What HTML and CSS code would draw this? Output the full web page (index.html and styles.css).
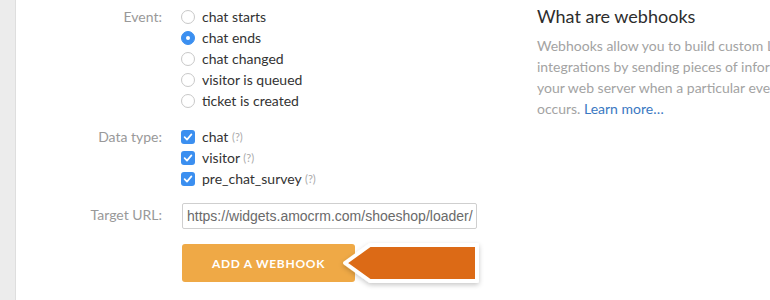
FILE: index.html
```html
<!DOCTYPE html>
<html>
<head>
<meta charset="utf-8">
<link rel="stylesheet" href="styles.css">
</head>
<body>
<div class="sidebar"></div>
<div class="main">
  <div class="form">
    <div class="label">Event:</div>
    <div class="group">
      <div class="opt"><span class="radio"></span>chat starts</div>
      <div class="opt"><span class="radio on"></span>chat ends</div>
      <div class="opt"><span class="radio"></span>chat changed</div>
      <div class="opt"><span class="radio"></span>visitor is queued</div>
      <div class="opt"><span class="radio"></span>ticket is created</div>
    </div>
    <div class="label">Data type:</div>
    <div class="group group-data">
      <div class="opt"><span class="check"><svg viewBox="0 0 14 14" width="14" height="14"><path d="M3.6 7.2 L6 9.6 L10.4 4.4" fill="none" stroke="#fff" stroke-width="1.7" stroke-linecap="round" stroke-linejoin="round"/></svg></span>chat <span class="q">(?)</span></div>
      <div class="opt"><span class="check"><svg viewBox="0 0 14 14" width="14" height="14"><path d="M3.6 7.2 L6 9.6 L10.4 4.4" fill="none" stroke="#fff" stroke-width="1.7" stroke-linecap="round" stroke-linejoin="round"/></svg></span>visitor <span class="q">(?)</span></div>
      <div class="opt"><span class="check"><svg viewBox="0 0 14 14" width="14" height="14"><path d="M3.6 7.2 L6 9.6 L10.4 4.4" fill="none" stroke="#fff" stroke-width="1.7" stroke-linecap="round" stroke-linejoin="round"/></svg></span>pre_chat_survey <span class="q">(?)</span></div>
    </div>
    <div class="label url-label">Target URL:</div>
    <div class="field">
      <input class="input" type="text" value="https://widgets.amocrm.com/shoeshop/loader/">
    </div>
    <div></div>
    <div class="actions">
      <button class="btn">ADD A WEBHOOK</button>
      <svg class="pointer" width="150" height="54" viewBox="0 0 150 54">
        <defs>
          <filter id="sh" x="-20%" y="-30%" width="140%" height="170%">
            <feDropShadow dx="0" dy="2" stdDeviation="2.5" flood-color="#000" flood-opacity="0.22"/>
          </filter>
        </defs>
        <polygon points="7,25 32,7 139,7 139,43 32,43" fill="#dc6b13" stroke="#fff" stroke-width="4" stroke-linejoin="round" filter="url(#sh)"/>
      </svg>
    </div>
  </div>
  <div class="info">
    <h2>What are webhooks</h2>
    <p>Webhooks allow you to build custom LiveChat<br>integrations by sending pieces of information to<br>your web server when a particular event<br>occurs. <a href="#">Learn more…</a></p>
  </div>
</div>
</body>
</html>
```
FILE: styles.css
```css
html, body {
  margin: 0;
  height: 100%;
}
body {
  display: flex;
  overflow: hidden;
  background: #fff;
  font-family: Lato, "Open Sans", sans-serif;
  font-size: 14px;
  color: #333;
}
.sidebar {
  width: 15px;
  flex: none;
  background: #ececec;
  border-right: 1px solid #dedede;
}
.main {
  display: flex;
  gap: 61px;
  padding-top: 6px;
  flex: none;
}
.form {
  width: 460px;
  display: grid;
  grid-template-columns: 146px 1fr;
  column-gap: 19px;
  align-content: start;
}
.label {
  text-align: right;
  color: #999;
  line-height: 21px;
}
.group {
  display: flex;
  flex-direction: column;
  margin-bottom: 15px;
}
.group-data {
  margin-bottom: 14px;
}
.opt {
  display: flex;
  align-items: center;
  height: 21px;
  line-height: 21px;
  white-space: pre;
}
.radio {
  width: 12px;
  height: 12px;
  border: 1px solid #c8c8c8;
  border-radius: 50%;
  margin-right: 7px;
  box-sizing: content-box;
  background: #fff;
}
.radio.on {
  background: #3b8ff0;
  border-color: #3b8ff0;
  position: relative;
}
.radio.on::after {
  content: "";
  position: absolute;
  left: 4px;
  top: 4px;
  width: 4px;
  height: 4px;
  border-radius: 50%;
  background: #fff;
}
.check {
  width: 14px;
  height: 14px;
  border-radius: 3px;
  background: #3b8ff0;
  margin-right: 7px;
  display: flex;
}
.q {
  font-size: 11px;
  color: #aaa;
}
.url-label {
  margin-top: 1px;
}
.field {
  margin-bottom: 15px;
}
.input {
  display: block;
  margin: 0 0 0 1px;
  height: 26px;
  width: 295px;
  border: 1px solid #cfcfcf;
  border-radius: 2px;
  padding: 0 0 0 4px;
  box-sizing: border-box;
  font-family: "Liberation Sans", Arial, sans-serif;
  font-size: 14px;
  color: #6a6a6a;
  background: #fff;
  outline: none;
}
.actions {
  position: relative;
  margin-left: 1px;
}
.btn {
  display: block;
  width: 173px;
  height: 38px;
  border: none;
  border-radius: 3px;
  background: #efa946;
  color: #fff;
  font-family: Lato, sans-serif;
  font-weight: bold;
  font-size: 12px;
  letter-spacing: 0.7px;
  padding: 0;
}
.pointer {
  position: absolute;
  left: 156px;
  top: -6px;
}
.info {
  width: 340px;
  flex: none;
}
.info h2 {
  margin: -1px 0 8px;
  font-size: 18px;
  font-weight: normal;
  line-height: 22px;
  color: #2d2d2d;
}
.info p {
  margin: 0;
  color: #a3a3a3;
  line-height: 21px;
  white-space: nowrap;
}
.info a {
  color: #3a78c2;
  text-decoration: none;
}
```
